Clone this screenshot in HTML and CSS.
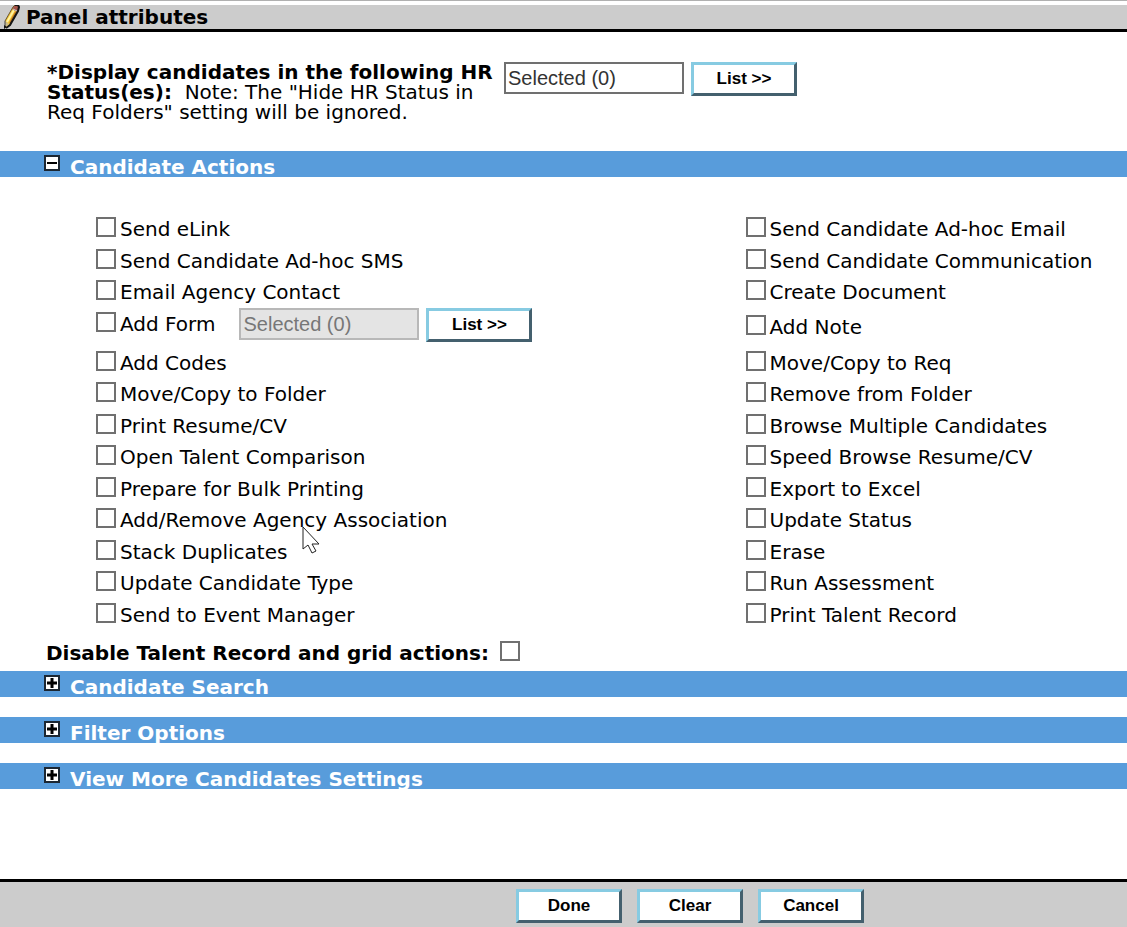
FILE: index.html
```html
<!DOCTYPE html>
<html lang="en">
<head>
<meta charset="utf-8">
<title>Panel attributes</title>
<link rel="stylesheet" href="styles.css">
</head>
<body>
<header class="titlebar">
  <svg class="pencil" viewBox="0 0 18 24" aria-hidden="true">
    <path d="M2 16 10 2l5 3-8 15-5 3z" fill="#f4c534"/>
    <path d="M4 17 11 5" stroke="#fff2a0" stroke-width="2"/>
    <path d="M7 18 13 7" stroke="#c27a22" stroke-width="2"/>
    <path d="M9 4l2-3 3-1 2 2-2 5z" fill="#a5554a"/>
    <path d="M10 4l4 2" stroke="#c9c9c9" stroke-width="1"/>
    <path d="M2 16 10 2l2-2" fill="none" stroke="#6b5730"/>
    <path d="M12 0h3l1 2-1 4-8 14-4 3" fill="none" stroke="#151515" stroke-width="2"/>
    <path d="M2 16l4 3-4 4z" fill="#c9ba8d"/>
    <path d="M2 16v7" stroke="#444"/>
    <path d="M1 20l3 2-3 2z" fill="#111"/>
  </svg>
  <h1 class="title">Panel attributes</h1>
</header>

<main class="content">
  <section class="status">
    <label class="status-label" for="hr-status"><b>*Display candidates in the following HR Status(es):</b>&nbsp; Note: The "Hide HR Status in Req Folders" setting will be ignored.</label>
    <input class="picker" id="hr-status" type="text" value="Selected (0)" readonly>
    <button class="btn" type="button">List &gt;&gt;</button>
  </section>

  <h2 class="bar"><button class="bar-toggle" type="button" aria-expanded="true">
    <svg class="toggle" viewBox="0 0 16 16" aria-hidden="true"><path d="M1 1h14v14H1z" fill="#fff" stroke="#1b2733" stroke-width="2"/><path d="M3 8h10" stroke="#000" stroke-width="2"/></svg>
    <span class="bar-text">Candidate Actions</span></button></h2>

  <section class="actions">
    <label class="check"><input class="box" type="checkbox">Send eLink</label>
    <label class="check"><input class="box" type="checkbox">Send Candidate Ad-hoc Email</label>
    <label class="check"><input class="box" type="checkbox">Send Candidate Ad-hoc SMS</label>
    <label class="check"><input class="box" type="checkbox">Send Candidate Communication</label>
    <label class="check"><input class="box" type="checkbox">Email Agency Contact</label>
    <label class="check"><input class="box" type="checkbox">Create Document</label>
    <div class="form-row">
      <label class="check"><input class="box" type="checkbox">Add Form</label>
      <input class="picker" type="text" value="Selected (0)" aria-label="Selected forms" disabled>
      <button class="btn" type="button">List &gt;&gt;</button>
    </div>
    <label class="check check-tall"><input class="box" type="checkbox">Add Note</label>
    <label class="check"><input class="box" type="checkbox">Add Codes</label>
    <label class="check"><input class="box" type="checkbox">Move/Copy to Req</label>
    <label class="check"><input class="box" type="checkbox">Move/Copy to Folder</label>
    <label class="check"><input class="box" type="checkbox">Remove from Folder</label>
    <label class="check"><input class="box" type="checkbox">Print Resume/CV</label>
    <label class="check"><input class="box" type="checkbox">Browse Multiple Candidates</label>
    <label class="check"><input class="box" type="checkbox">Open Talent Comparison</label>
    <label class="check"><input class="box" type="checkbox">Speed Browse Resume/CV</label>
    <label class="check"><input class="box" type="checkbox">Prepare for Bulk Printing</label>
    <label class="check"><input class="box" type="checkbox">Export to Excel</label>
    <label class="check"><input class="box" type="checkbox">Add/Remove Agency Association</label>
    <label class="check"><input class="box" type="checkbox">Update Status</label>
    <label class="check"><input class="box" type="checkbox">Stack Duplicates</label>
    <label class="check"><input class="box" type="checkbox">Erase</label>
    <label class="check"><input class="box" type="checkbox">Update Candidate Type</label>
    <label class="check"><input class="box" type="checkbox">Run Assessment</label>
    <label class="check"><input class="box" type="checkbox">Send to Event Manager</label>
    <label class="check"><input class="box" type="checkbox">Print Talent Record</label>
  </section>

  <div class="disable">
    <label for="disable-actions">Disable Talent Record and grid actions:</label>
    <input class="box" id="disable-actions" type="checkbox">
  </div>

  <div class="sections">
    <h2 class="bar"><button class="bar-toggle" type="button" aria-expanded="false">
      <svg class="toggle" viewBox="0 0 16 16" aria-hidden="true"><path d="M1 1h14v14H1z" fill="#fff" stroke="#1b2733" stroke-width="2"/><path d="M3 8h10M8 3v10" stroke="#000" stroke-width="3"/></svg>
      <span class="bar-text">Candidate Search</span></button></h2>
    <h2 class="bar"><button class="bar-toggle" type="button" aria-expanded="false">
      <svg class="toggle" viewBox="0 0 16 16" aria-hidden="true"><path d="M1 1h14v14H1z" fill="#fff" stroke="#1b2733" stroke-width="2"/><path d="M3 8h10M8 3v10" stroke="#000" stroke-width="3"/></svg>
      <span class="bar-text">Filter Options</span></button></h2>
    <h2 class="bar"><button class="bar-toggle" type="button" aria-expanded="false">
      <svg class="toggle" viewBox="0 0 16 16" aria-hidden="true"><path d="M1 1h14v14H1z" fill="#fff" stroke="#1b2733" stroke-width="2"/><path d="M3 8h10M8 3v10" stroke="#000" stroke-width="3"/></svg>
      <span class="bar-text">View More Candidates Settings</span></button></h2>
  </div>
</main>

<footer class="footer">
  <button class="btn" type="button">Done</button>
  <button class="btn" type="button">Clear</button>
  <button class="btn" type="button">Cancel</button>
</footer>

<svg class="cursor" viewBox="0 0 18 28" aria-hidden="true"><path d="M1 1v22l5-4 4 8 4-2-4-7h7z" fill="#fff" stroke="#222"/></svg>
</body>
</html>
```

FILE: styles.css
```css
* { box-sizing: border-box; }

body {
  margin: 0;
  min-height: 100vh;
  display: flex;
  flex-direction: column;
  background: #fff;
  color: #000;
  font-family: Verdana, "DejaVu Sans", sans-serif;
  font-size: 20px;
  line-height: 24px;
}

.titlebar {
  display: flex;
  height: 32px;
  padding-top: 4px;
  gap: 5px;
  border-top: 1px solid #b0b0b0;
  border-bottom: 3px solid #000;
  background: #ccc content-box;
}
.pencil { width: 18px; height: 24px; margin-left: 3px; }
.title { margin: 0; font-size: 20px; line-height: 24px; }

.content { flex: 1; }

.status {
  display: flex;
  align-items: flex-start;
  min-height: 119px;
  padding: 30px 0 0 47px;
}
.status-label { width: 457px; line-height: 20px; }

.picker {
  width: 180px;
  height: 32px;
  padding: 0 2px;
  border: 2px solid #707070;
  background: #fff;
  color: #333;
  font: 20px "Liberation Sans", Arial, sans-serif;
}
.picker:disabled { border-color: #b8b8b8; background: #e4e4e4; color: #777; }

.btn {
  width: 106px;
  height: 34px;
  padding: 0;
  border: 3px solid;
  border-color: #87cbe2 #44606e #44606e #87cbe2;
  background: #fff;
  color: #000;
  font: bold 17px "Liberation Sans", Arial, sans-serif;
}
.picker + .btn { margin-left: 7px; }

.bar { height: 26px; margin: 0; overflow: hidden; background: #589cdb; }
.bar-toggle {
  display: flex;
  align-items: flex-start;
  width: 100%;
  gap: 10px;
  padding: 4px 0 0 44px;
  border: 0;
  background: none;
  color: #fff;
  font: bold 20px/24px Verdana, "DejaVu Sans", sans-serif;
}
.toggle { width: 16px; height: 16px; flex: none; }

.actions {
  display: grid;
  grid-template-columns: 63% 1fr;
  grid-template-rows: 32px 31px 32px 39px repeat(4, 31px 32px) 31px;
  padding: 35px 0 0 96px;
}
.check {
  display: flex;
  align-items: flex-start;
  gap: 4px;
  padding-top: 5px;
  white-space: nowrap;
}
.check-tall { padding-top: 8px; }
.box {
  appearance: none;
  flex: none;
  width: 20px;
  height: 20px;
  margin: 0;
  border: 2px solid #707070;
  background: #fff;
}
.box:checked { background: #707070; }
.form-row { display: flex; align-items: flex-start; }
.form-row .picker { margin-left: 24px; }
.form-row .picker, .form-row .btn { margin-top: 1px; }

.disable {
  display: flex;
  gap: 11px;
  padding: 12px 0 6px 46px;
  font-weight: bold;
  line-height: 24px;
}
.sections { display: grid; gap: 20px; }

.footer {
  display: flex;
  justify-content: center;
  gap: 15px;
  height: 48px;
  padding: 7px 0 0 253px;
  border-top: 3px solid #000;
  background: #ccc;
}

.cursor { position: absolute; left: 302px; top: 526px; width: 18px; height: 28px; }
```
